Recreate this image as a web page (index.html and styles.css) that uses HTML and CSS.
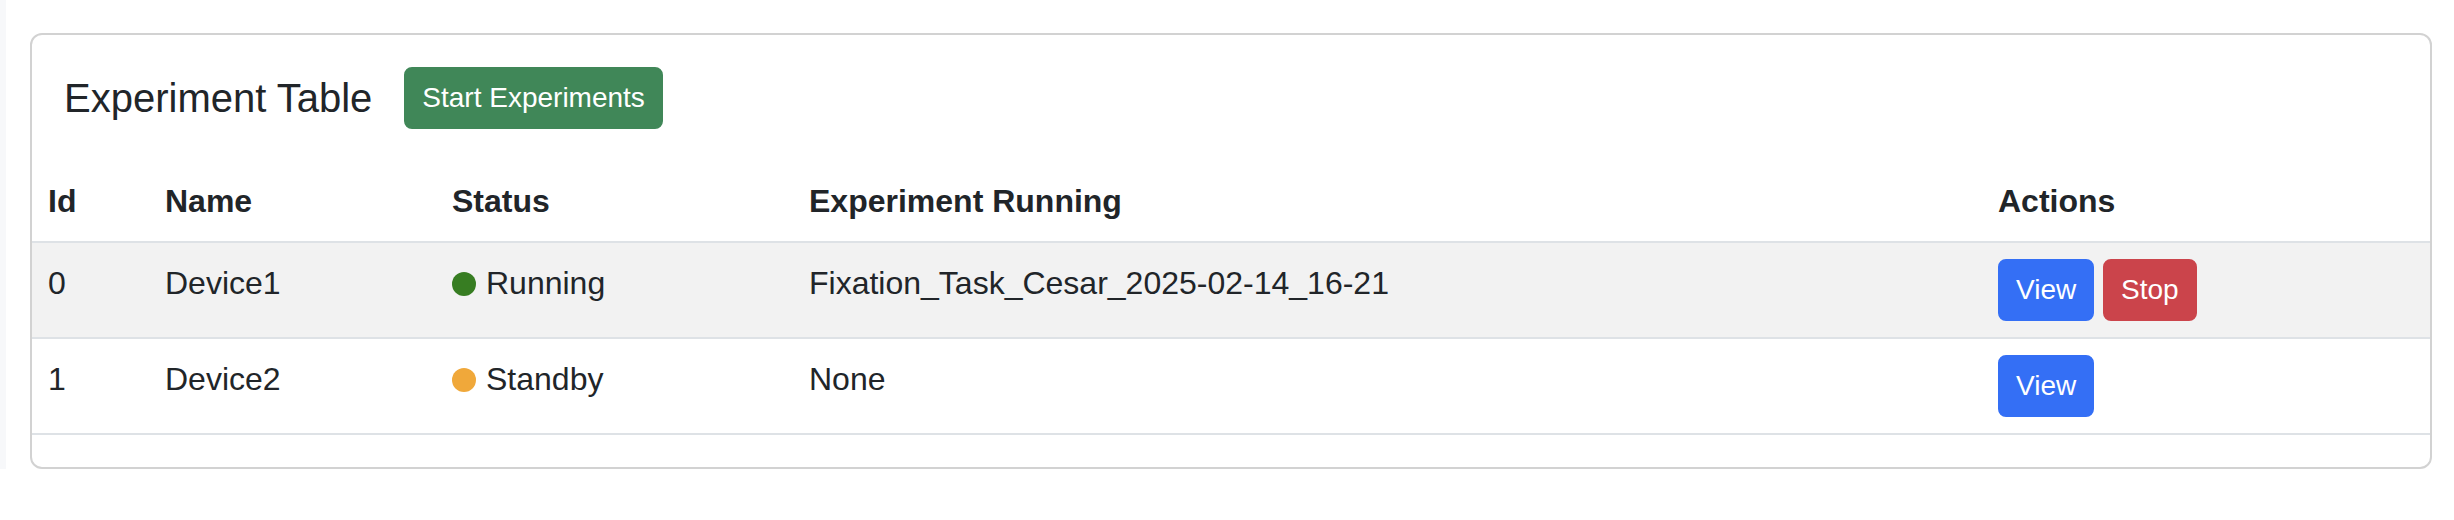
FILE: index.html
```html
<!DOCTYPE html>
<html lang="en">
<head>
<meta charset="utf-8">
<title>Experiment Table</title>
<link rel="stylesheet" href="styles.css">
</head>
<body>
<div class="page">
  <div class="side"></div>
  <main class="main">
    <section class="card">
      <div class="card-head">
        <h4 class="title">Experiment Table</h4>
        <button class="btn btn-success">Start Experiments</button>
      </div>
      <table class="table">
        <colgroup>
          <col class="col-id">
          <col class="col-name">
          <col class="col-status">
          <col class="col-exp">
          <col class="col-actions">
        </colgroup>
        <thead>
          <tr>
            <th>Id</th>
            <th>Name</th>
            <th>Status</th>
            <th>Experiment Running</th>
            <th>Actions</th>
          </tr>
        </thead>
        <tbody>
          <tr class="striped">
            <td>0</td>
            <td>Device1</td>
            <td><span class="dot dot-running"></span>Running</td>
            <td>Fixation_Task_Cesar_2025-02-14_16-21</td>
            <td><button class="btn btn-primary">View</button> <button class="btn btn-danger">Stop</button></td>
          </tr>
          <tr>
            <td>1</td>
            <td>Device2</td>
            <td><span class="dot dot-standby"></span>Standby</td>
            <td>None</td>
            <td><button class="btn btn-primary">View</button></td>
          </tr>
        </tbody>
      </table>
    </section>
  </main>
</div>
</body>
</html>
```

FILE: styles.css
```css
* {
  box-sizing: border-box;
}

html, body {
  margin: 0;
  padding: 0;
  background: #ffffff;
}

body {
  font-family: "Liberation Sans", Arial, Helvetica, sans-serif;
  font-size: 32px;
  line-height: 1.5;
  color: #212529;
}

.page {
  display: flex;
  align-items: stretch;
}

.side {
  width: 6px;
  flex: 0 0 6px;
  background: #f7f8fa;
}

.main {
  flex: 1 1 auto;
  padding: 33px 22px 0 24px;
}

.card {
  border: 2px solid #d2d2d2;
  border-radius: 12px;
  background: #ffffff;
}

.card-head {
  display: flex;
  align-items: center;
  padding: 32px;
}

.title {
  margin: 0 32px 0 0;
  font-size: 40px;
  font-weight: 400;
  line-height: 1.2;
}

.btn {
  display: inline-block;
  font-family: inherit;
  font-size: 28px;
  line-height: 42px;
  padding: 8px 16px;
  border: 2px solid transparent;
  border-radius: 8px;
  color: #ffffff;
  cursor: pointer;
  vertical-align: baseline;
}

.btn-success {
  background: #408758;
  border-color: #408758;
}

.btn-primary {
  background: #346ff5;
  border-color: #346ff5;
}

.btn-danger {
  background: #cb444b;
  border-color: #cb444b;
}

.table {
  width: 100%;
  border-collapse: collapse;
  table-layout: fixed;
  margin-bottom: 32px;
}

.col-id { width: 117px; }
.col-name { width: 287px; }
.col-status { width: 357px; }
.col-exp { width: 1189px; }
.col-actions { width: 448px; }

.table th,
.table td {
  padding: 16px;
  text-align: left;
  vertical-align: top;
  border-bottom: 2px solid #dee2e6;
}

.table th {
  font-weight: 700;
}

.striped td {
  background: #f2f2f2;
}

.dot {
  display: inline-block;
  width: 24px;
  height: 24px;
  border-radius: 50%;
  margin-right: 10px;
  vertical-align: -2px;
}

.dot-running {
  background: #377d22;
}

.dot-standby {
  background: #f0a83a;
}
```
